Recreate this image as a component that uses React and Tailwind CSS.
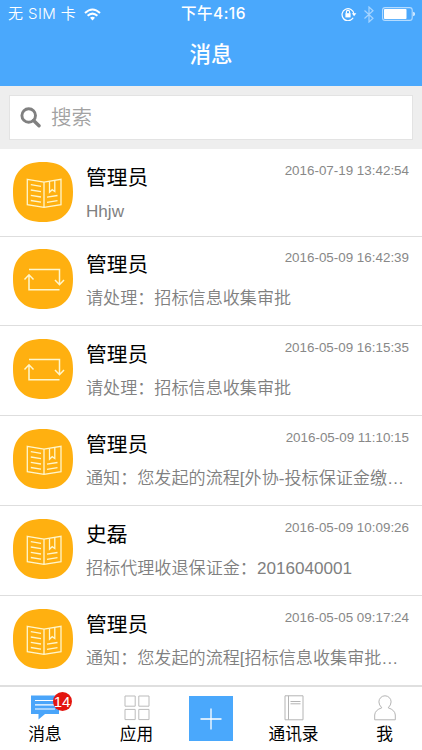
import React from "react";

const messages = [
  { icon: "book", name: "管理员", text: "Hhjw", time: "2016-07-19 13:42:54" },
  { icon: "loop", name: "管理员", text: "请处理：招标信息收集审批", time: "2016-05-09 16:42:39" },
  { icon: "loop", name: "管理员", text: "请处理：招标信息收集审批", time: "2016-05-09 16:15:35" },
  { icon: "book", name: "管理员", text: "通知：您发起的流程[外协-投标保证金缴…", time: "2016-05-09 11:10:15" },
  { icon: "book", name: "史磊", text: "招标代理收退保证金：2016040001", time: "2016-05-09 10:09:26" },
  { icon: "book", name: "管理员", text: "通知：您发起的流程[招标信息收集审批…", time: "2016-05-05 09:17:24" },
];

const MessageIcon = ({ type }) => (
  <svg viewBox="0 0 60 60" className="w-[60px] h-[60px] shrink-0" fill="none">
    <path
      d="M30 0C40.5 0 47.5 2.2 52.5 7.5C57.8 12.5 60 19.5 60 30C60 40.5 57.8 47.5 52.5 52.5C47.5 57.8 40.5 60 30 60C19.5 60 12.5 57.8 7.5 52.5C2.2 47.5 0 40.5 0 30C0 19.5 2.2 12.5 7.5 7.5C12.5 2.2 19.5 0 30 0Z"
      fill="#ffb010"
    />
    {type === "book" ? (
      <g stroke="#fff6cc" strokeWidth="1.3">
        <path d="M14.3 17.3L31 20.2L48 17.3V42.7L31 45.4L14.3 42.7ZM31 20.2V45.4" />
        <path d="M17.8 22.7L28 24.4M17.8 28L28 29.7M17.8 33.3L28 35M17.8 38.5L28 40.2" />
        <path d="M34 35.2L44.5 33.5M34 40.3L44.5 38.6" />
        <path d="M36.5 19.3V30.2L39.2 27.7L41.8 29.5V18.4" />
      </g>
    ) : (
      <g stroke="#fff6cc" strokeWidth="1.5">
        <path d="M16 20.4H46.5V35.3M42 31L46.5 35.7L51 31" />
        <path d="M46.5 40.8H16V26M11.5 30.4L16 25.8L20.5 30.4" />
      </g>
    )}
  </svg>
);

const StatusBar = () => (
  <div className="h-7 flex items-center justify-between pl-2 pr-[7px] text-[15px] text-white font-['Inter','Noto_Sans_CJK_SC',sans-serif]">
    <div className="flex-1 flex items-center gap-2">
      <span className="font-[350] whitespace-pre tracking-[0.4px]">无 SIM 卡</span>
      <svg viewBox="0 0 17 13" className="w-[17px] h-[13px]" fill="none" stroke="#fff" strokeWidth="2">
        <path d="M1 5Q8.5 -2 16 5" />
        <path d="M3.6 7.8Q8.5 3.4 13.4 7.8" />
        <path d="M6 9.8Q8.5 7.6 11 9.8L8.5 12.5Z" fill="#fff" stroke="none" />
      </svg>
    </div>
    <span className="pl-1 text-[15.5px] font-medium tracking-[0.5px]">下午4:16</span>
    <div className="flex-1 flex items-center justify-end">
      <svg viewBox="0 0 16 14" className="w-4 h-3.5 mr-[7px]" fill="none" stroke="#fff" strokeWidth="1.2">
        <path d="M12.2 10.8A6 6 0 1 1 13 7" />
        <path d="M10.8 6.3H15.4L13.1 9.2Z" fill="#fff" stroke="none" />
        <rect x="4.4" y="6.2" width="5.2" height="4.2" fill="#fff" stroke="none" />
        <path d="M5.4 6.5V5A1.6 1.6 0 0 1 8.6 5V6.5" />
      </svg>
      <svg viewBox="0 0 10 17" className="w-2.5 h-[17px] mr-2" fill="none" stroke="#a5d4ff" strokeWidth="1.2">
        <path d="M0.5 4.5L9 12.3L5 16V1L9 4.7L0.5 12.5" />
      </svg>
      <svg viewBox="0 0 33 14" className="w-[33px] h-3.5">
        <rect x="0.6" y="0.6" width="29.6" height="12.8" rx="2.5" fill="none" stroke="#b5dcff" strokeWidth="1.1" />
        <rect x="2" y="2" width="22.5" height="10" rx="0.8" fill="#fff" />
        <path d="M31.2 4.8Q33 5.2 33 7Q33 8.8 31.2 9.2Z" fill="#e4f3ff" />
      </svg>
    </div>
  </div>
);

const SearchBar = () => (
  <div className="h-[63px] shrink-0 bg-[#eeeeee] px-[9px] pt-[9px]">
    <div className="h-[45px] bg-white border border-[#e3e3e3] flex items-center pl-2.5">
      <svg viewBox="0 0 21 21" className="w-[21px] h-[21px] mr-[10px]" fill="none" stroke="#808080">
        <circle cx="8.7" cy="8.5" r="6.8" strokeWidth="2.9" />
        <path d="M13.6 13.5L19 18.8" strokeWidth="3.4" strokeLinecap="round" />
      </svg>
      <span className="pt-0.5 text-[20.5px] font-[350] text-[#a2a2a2]">搜索</span>
    </div>
  </div>
);

const MessageRow = ({ icon, name, text, time }) => (
  <div className="h-[89.8px] first:h-[87.5px] first:pt-[12.7px] pt-[12.9px] pl-[13px] pr-[13px] flex gap-[13px] border-b-[1.5px] border-[#dedede] last:border-b-0">
    <MessageIcon type={icon} />
    <div className="flex-1 min-w-0">
      <div className="flex justify-between">
        <span className="text-[20.7px] leading-[32px] text-black">{name}</span>
        <span className="text-[13.4px] leading-[17px] text-[#888888]">{time}</span>
      </div>
      <p className="mt-1 text-[17.1px] leading-[28px] font-[350] text-[#808080] whitespace-nowrap">{text}</p>
    </div>
  </div>
);

const TabItem = ({ label, badge, children }) => (
  <div className="w-[74px] shrink-0 flex flex-col items-center">
    <div className="relative mt-2 h-7">
      {children}
      {badge && (
        <span className="absolute left-[21.5px] -top-[3px] w-[19px] h-[19px] rounded-full bg-[#e3150f] text-white text-[15px] leading-[20px] flex justify-center">
          {badge}
        </span>
      )}
    </div>
    <span className="text-[16.7px] leading-6 text-black">{label}</span>
  </div>
);

const TabBar = () => (
  <div className="h-[65px] shrink-0 bg-white border-t-2 border-[#dfdfdf] flex pl-2">
    <TabItem label="消息" badge="14">
      <svg viewBox="0 0 28 26" className="w-7 h-[26px]">
        <path d="M0 0.5H28V19H14L7.5 24.6V19H0Z" fill="#4aa5fa" />
        <path d="M4 5.5H24M4 9.8H24M4 14H24" stroke="#fff" strokeWidth="1.2" />
      </svg>
    </TabItem>
    <div className="ml-[17.5px]">
      <TabItem label="应用">
        <svg viewBox="0 0 26 26" className="w-[26px] h-[26px]" fill="none" stroke="#bbbbbb">
          <path d="M1 1H11.2V11.2H1ZM14.8 1H25V11.2H14.8ZM1 14.4H11.2V24.6H1ZM14.8 14.4H25V24.6H14.8Z" />
        </svg>
      </TabItem>
    </div>
    <button className="ml-[15px] mt-[9px] w-[44.5px] h-[45px] shrink-0 bg-[#4aa8fc] flex items-center justify-center">
      <svg viewBox="0 0 22 22" className="w-[22px] h-[22px]" stroke="#fff" strokeWidth="1.3">
        <path d="M11 0.5V21.5M0.5 11H21.5" />
      </svg>
    </button>
    <div className="ml-[23.5px]">
      <TabItem label="通讯录">
        <svg viewBox="0 0 20 26" className="w-5 h-[26px]" fill="none" stroke="#b4b4b4">
          <path d="M1 0.8H19V24.8H1ZM4.5 0.8V24.8M6.5 6.5H16.5M6.5 8.8H16.5" />
        </svg>
      </TabItem>
    </div>
    <div className="ml-[17px]">
      <TabItem label="我">
        <svg viewBox="0 0 22 26" className="w-[22px] h-[26px]" fill="none" stroke="#b4b4b4">
          <path d="M0.7 24.8V20Q1 15 7.8 12.8Q4.9 10 4.9 6.9A6.1 6.1 0 0 1 17.1 6.9Q17.1 10 14.2 12.8Q21 15 21.3 20V24.8Z" />
        </svg>
      </TabItem>
    </div>
  </div>
);

const App = () => {
  return (
    <div className="w-[422px] h-[750px] overflow-hidden bg-white flex flex-col font-['Liberation_Sans','Noto_Sans_CJK_SC',sans-serif]">
      <header className="h-[86px] shrink-0 bg-[#4aa8fc]">
        <StatusBar />
        <h1 className="text-center text-[21.5px] leading-[55px] font-medium text-white">消息</h1>
      </header>
      <SearchBar />
      <main className="h-[536px] shrink-0 overflow-hidden">
        {messages.map((message) => (
          <MessageRow key={message.time} {...message} />
        ))}
      </main>
      <TabBar />
    </div>
  );
};

export default App;
